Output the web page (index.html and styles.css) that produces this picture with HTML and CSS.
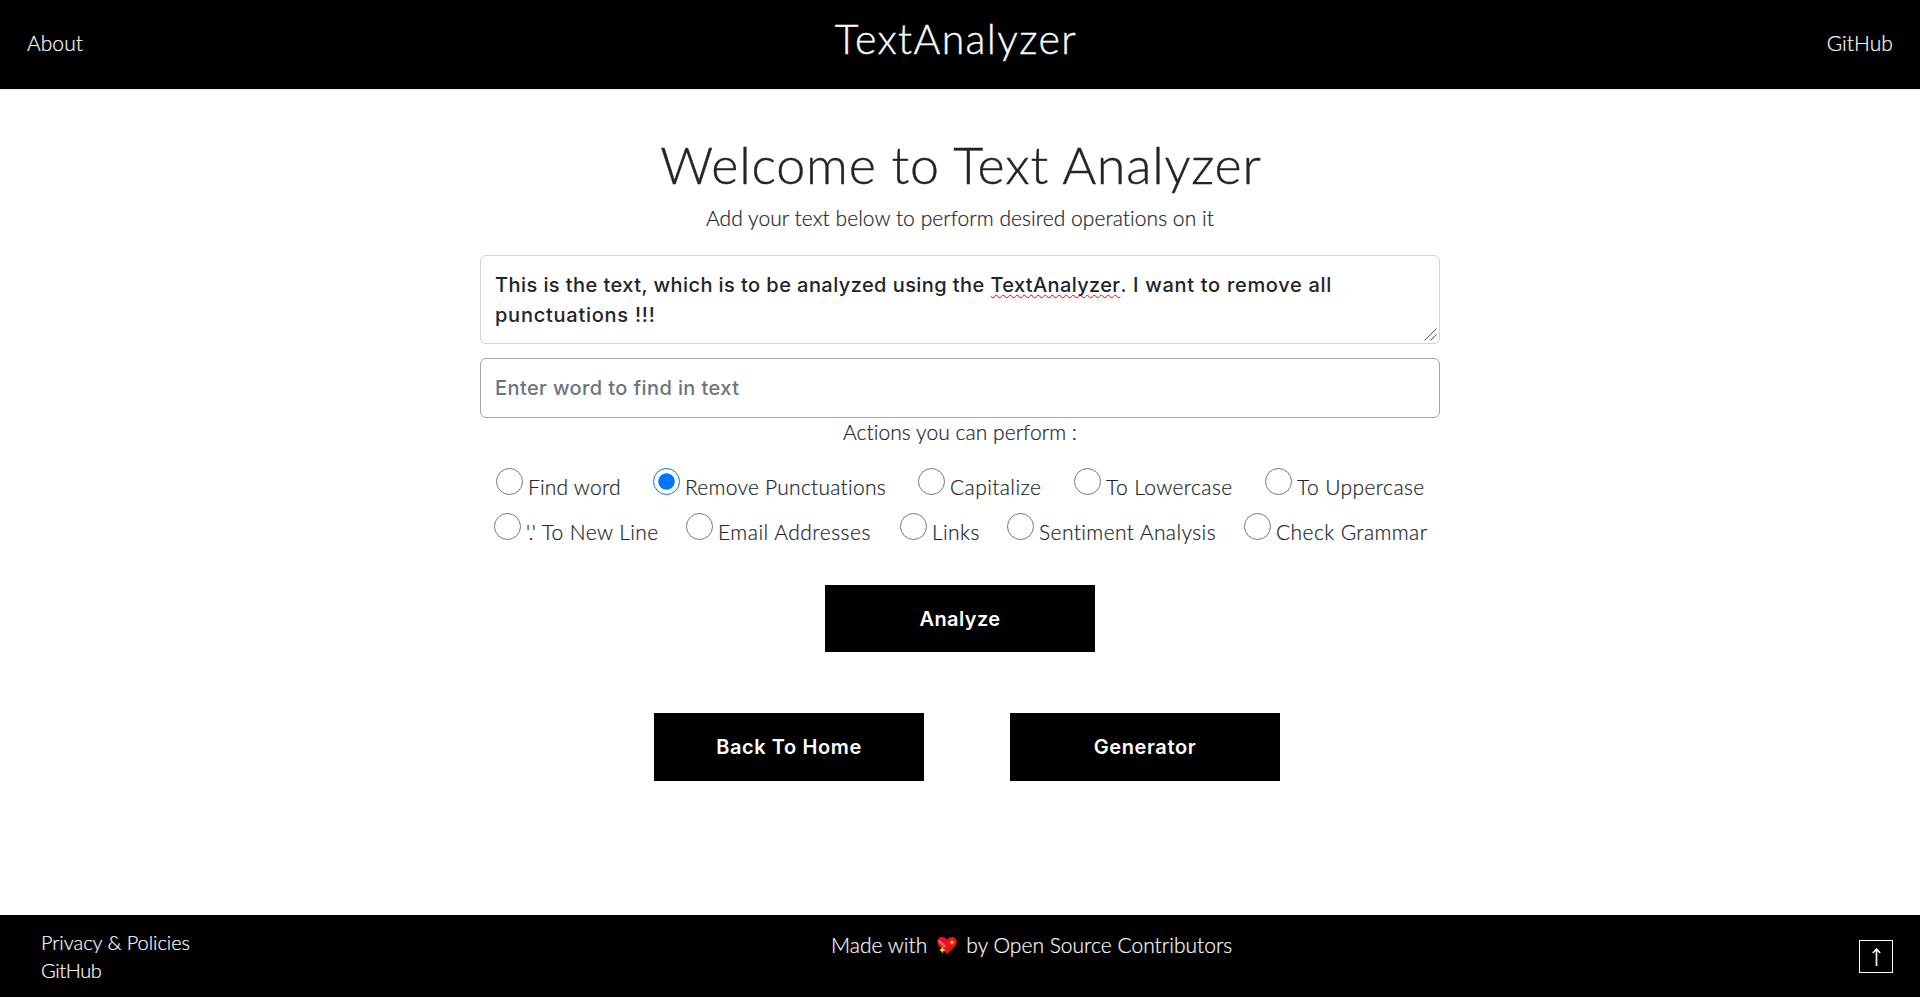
FILE: index.html
```html
<!DOCTYPE html>
<html lang="en">
<head>
<meta charset="utf-8">
<title>TextAnalyzer</title>
<link rel="stylesheet" href="styles.css">
</head>
<body>
<header class="nav">
  <a class="nav-link">About</a>
  <a class="brand">TextAnalyzer</a>
  <a class="nav-link nav-right">GitHub</a>
</header>
<main class="main">
  <h1 class="title">Welcome to Text Analyzer</h1>
  <p class="lead">Add your text below to perform desired operations on it</p>
  <div class="field area"><div>This is the text, which is to be analyzed using the <span class="typo">TextAnalyzer</span><span class="rest">. I want to remove all</span></div><div class="line2">punctuations !!!</div>
    <svg class="grip" width="13" height="13" viewBox="0 0 13 13"><path d="M.5 12.5l12-12M6.5 12.5l6-6" stroke="#555" fill="none"/></svg>
  </div>
  <div class="field word">Enter word to find in text</div>
  <p class="actions">Actions you can perform :</p>
  <div class="row row-a">
    <label class="opt find"><i class="radio"></i><span>Find word</span></label>
    <label class="opt remove"><i class="radio on"></i><span>Remove Punctuations</span></label>
    <label class="opt"><i class="radio"></i><span>Capitalize</span></label>
    <label class="opt"><i class="radio"></i><span>To Lowercase</span></label>
    <label class="opt"><i class="radio"></i><span>To Uppercase</span></label>
  </div>
  <div class="row row-b">
    <label class="opt"><i class="radio"></i><span>'.' To New Line</span></label>
    <label class="opt email"><i class="radio"></i><span>Email Addresses</span></label>
    <label class="opt"><i class="radio"></i><span>Links</span></label>
    <label class="opt"><i class="radio"></i><span>Sentiment Analysis</span></label>
    <label class="opt"><i class="radio"></i><span>Check Grammar</span></label>
  </div>
  <button class="btn analyze">Analyze</button>
  <div class="pair">
    <button class="btn home">Back To Home</button>
    <button class="btn home">Generator</button>
  </div>
</main>
<footer class="footer">
  <div class="links"><a>Privacy &amp; Policies</a><a class="gh">GitHub</a></div>
  <div class="made"><span>Made with</span>
    <svg class="heart" width="20" height="17" viewBox="0 0 20 17"><path d="M10 17L1.5 8.6C-1.5 4.500 1 0 5 0c2.500 0 4 1 5 2.700C11 1 12.500 0 15 0c4 0 6.500 4.500 3.500 8.600z" fill="#e81224"/><path d="M3 3.500C2 6 6 6 8 10" stroke="#f4605f" stroke-width="2.600" fill="none"/><path d="M15 2.500l.8 2 2 .8-2 .8-.8 2-.8-2-2-.8 2-.8zM5.300 9.500l1 2.500 2.400 1-2.400 1-1 2.500-1-2.500L2 13l2.300-1z" fill="#ffe100"/></svg>
    <span>by Open Source Contributors</span></div>
  <a class="top"><svg width="9" height="18" viewBox="0 0 9 18"><path d="M4.500 18V1.500M.8 5l3.700-4 3.700 4" stroke="#f5efe6" stroke-width="1.700" fill="none"/></svg></a>
</footer>
</body>
</html>
```
FILE: styles.css
```css
* { box-sizing: border-box; }
body { margin: 0; min-height: 997px; display: flex; flex-direction: column; background: #fff; color: #212529; font: 300 21px/30px Lato, sans-serif; font-variant-ligatures: none; letter-spacing: .05px; -webkit-text-stroke: .2px; }
h1, p { margin: 0; font-weight: 300; }
.nav { height: 89px; background: #000; color: #f8f9fa; display: grid; grid-template-columns: 1fr auto 1fr; padding: 0 27px 0 27px; box-shadow: 0 2px 0 #f3f3f3; }
.nav-link { padding-top: 28px; }
.nav-right { text-align: right; }
.brand { font-size: 41px; line-height: 48px; letter-spacing: 1.4px; padding: 15px 8px 0 0; -webkit-text-stroke: .4px; }
.main { width: 960px; margin: 0 auto; flex: 1; display: flex; flex-direction: column; align-items: center; }
.title { margin-top: 45px; padding-left: 2px; font-size: 52px; line-height: 60px; letter-spacing: .78px; white-space: nowrap; -webkit-text-stroke: .4px; }
.lead { margin-top: 9px; }
.field { width: 960px; border: 1px solid #ced4da; border-radius: 6px; padding: 14px; font: 500 20px/30px Inter, sans-serif; letter-spacing: .4px; -webkit-text-stroke: 0; }
.area { position: relative; height: 89px; margin-top: 22px; white-space: nowrap; letter-spacing: .43px; }
.line2 { letter-spacing: .75px; }
.rest { letter-spacing: .7px; }
.typo { letter-spacing: .35px; text-decoration: underline wavy #f00 1px; text-decoration-skip-ink: none; text-underline-offset: 2px; }
.grip { position: absolute; right: 2px; bottom: 2px; }
.word { height: 60px; margin-top: 14px; border-color: #a6a6a6; color: #6c757d; }
.actions { height: 30px; line-height: 28px; }
.row { width: 960px; height: 27px; display: grid; letter-spacing: .4px; }
.row-a { margin-top: 20px; padding-left: 16px; grid-template-columns: 157px 265px 156px 191px auto; }
.row-b { margin-top: 18px; padding-left: 14px; grid-template-columns: 192px 214px 107px 237px auto; }
.opt { display: flex; gap: 5px; white-space: nowrap; }
.opt span { padding-top: 4px; }
.find { letter-spacing: .2px; }
.remove { letter-spacing: .25px; }
.email { letter-spacing: .5px; }
.radio { width: 27px; height: 27px; flex: none; border: 1px solid #767676; border-radius: 50%; }
.on { border-color: #0075ff; background: radial-gradient(circle, #0075ff 7.800px, transparent 8.500px); }
.btn { width: 270px; height: 67px; border: 0; padding: 0; background: #000; color: #fff; font: 600 20px/30px Inter, sans-serif; letter-spacing: .4px; -webkit-text-stroke: 0; }
.analyze { margin-top: 45px; }
.pair { margin: 61px 0 0 14px; display: flex; gap: 86px; }
.home { height: 68px; letter-spacing: .6px; }
.footer { height: 82px; background: #000; color: #f8f9fa; display: grid; grid-template-columns: 790px 1fr auto; padding: 0 27px 0 41px; }
.links { display: flex; flex-direction: column; padding-top: 13px; font-size: 20px; line-height: 28px; letter-spacing: -.05px; }
.gh { letter-spacing: -.4px; }
.made { display: flex; padding-top: 15px; letter-spacing: .02px; }
.heart { margin: 7px 9px 0 10px; }
.top { width: 34px; height: 33px; margin-top: 25px; border: 1px solid #fff; display: flex; align-items: center; justify-content: center; }
```
